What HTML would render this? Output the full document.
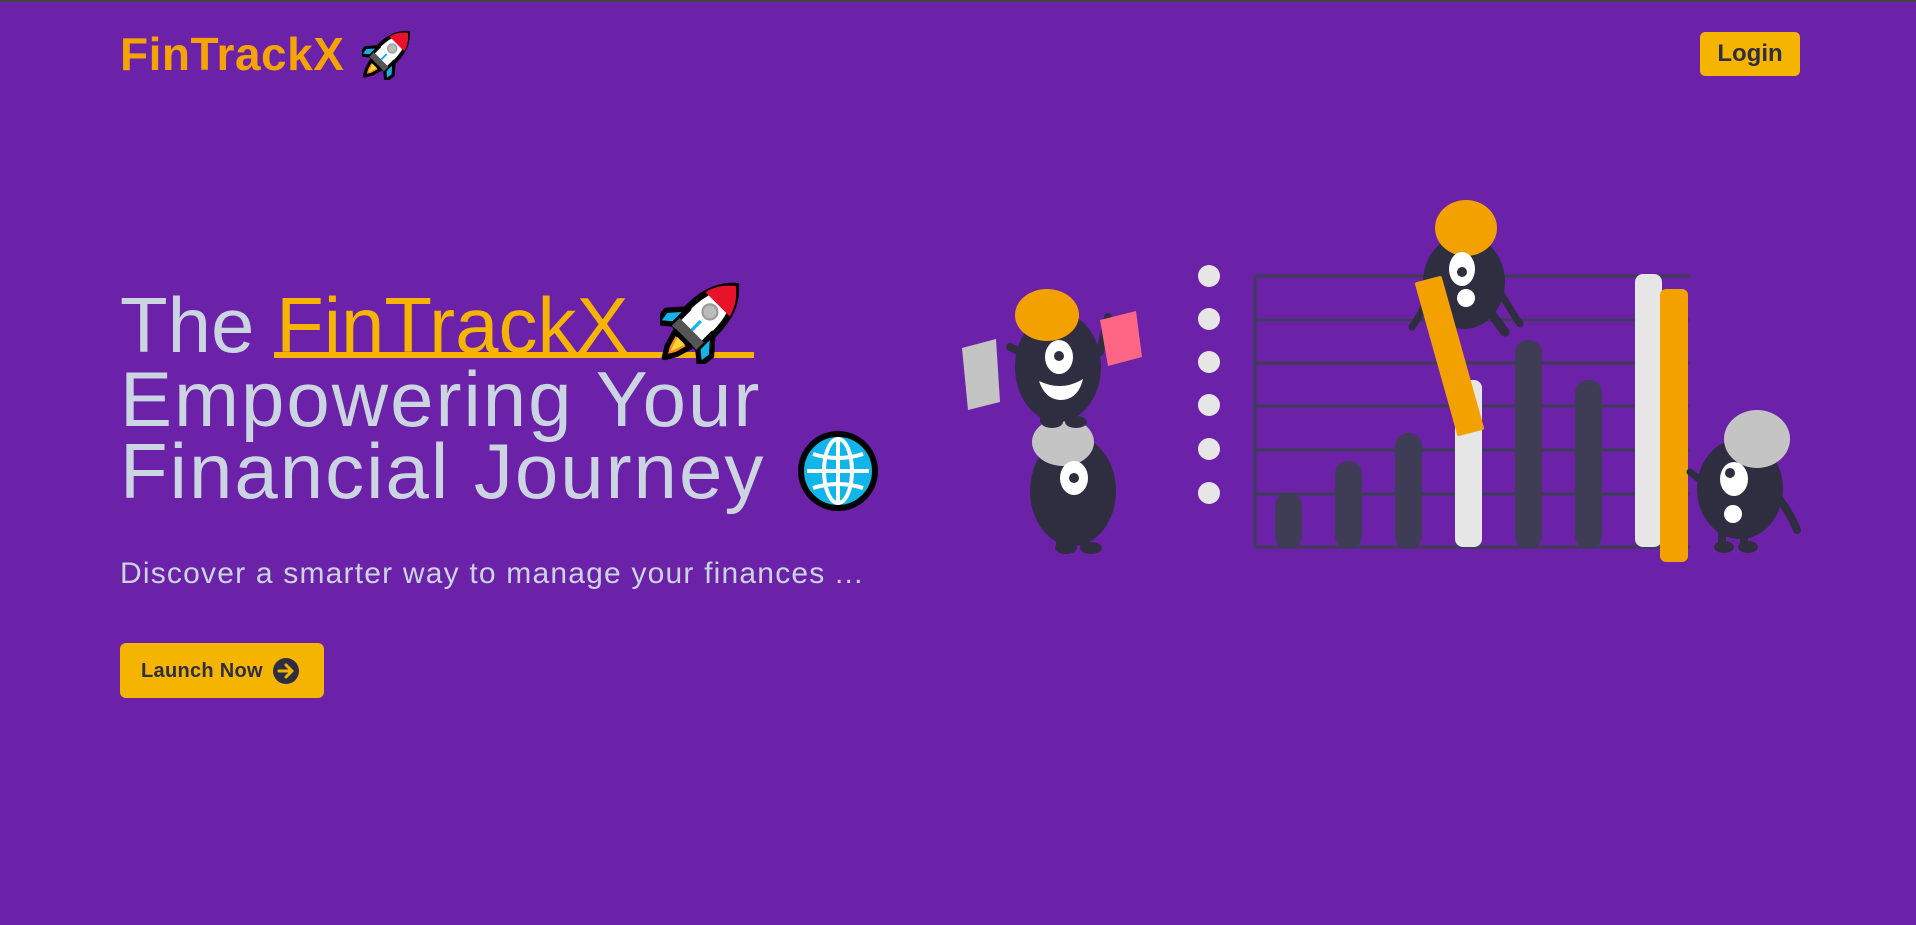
<!DOCTYPE html>
<html><head><meta charset="utf-8"><style>
html,body{margin:0;padding:0}
body{width:1916px;height:923px;background:#6b21a8;position:relative;overflow:hidden;font-family:"Liberation Sans",sans-serif;border-top:2px solid #444}
.a{position:absolute;white-space:nowrap;line-height:1}
.h{font-size:78px;color:#cbd5e1;letter-spacing:2px}
</style></head><body>
<svg width="0" height="0" style="position:absolute"><defs>
<g id="rocket">
<g transform="rotate(45 50 50)">
<path d="M50 4 C66 18 70 40 66 70 L34 70 C30 40 34 18 50 4Z" fill="#fff" stroke="#000" stroke-width="6"/>
<path d="M50 4 C60 12 64 20 66 28 L34 28 C36 20 40 12 50 4Z" fill="#e8132a"/>
<path d="M34 50 L20 66 L22 80 L34 70Z M66 50 L80 66 L78 80 L66 70Z" fill="#12b5ea" stroke="#000" stroke-width="5" stroke-linejoin="round"/>
<rect x="34" y="62" width="32" height="10" fill="#555"/>
<path d="M40 74 L60 74 L56 88 L50 98 L44 88Z" fill="#ff8c1a" stroke="#000" stroke-width="5" stroke-linejoin="round"/>
<path d="M45 76 L55 76 L50 90Z" fill="#ffd43b"/>
<circle cx="50" cy="38" r="7" fill="#bbb" stroke="#999" stroke-width="2"/>
<line x1="50" y1="50" x2="50" y2="62" stroke="#12b5ea" stroke-width="3"/>
</g></g>
</defs></svg>

<div class="a" style="left:120px;top:29px;font-size:46px;font-weight:bold;color:#f5a300;letter-spacing:0.5px">FinTrackX</div>
<svg class="a" style="left:362px;top:26px" width="52" height="52" viewBox="12 10 80 80"><use href="#rocket"/></svg>

<div class="a" style="left:1700px;top:30px;width:100px;height:44px;background:#f5b400;border-radius:5px;font-size:24px;font-weight:bold;color:#2f2e41;text-align:center;line-height:44px">Login</div>

<div class="a h" style="left:120px;top:284px;letter-spacing:0">The <span style="color:#f5b400">FinTrackX</span></div>
<div class="a" style="left:274px;top:350px;width:480px;height:6px;background:#f5b400"></div>
<svg class="a" style="left:660px;top:276px" width="86" height="86" viewBox="12 10 80 80"><use href="#rocket"/></svg>
<div class="a h" style="left:120px;top:358px">Empowering Your</div>
<div class="a h" style="left:120px;top:430px">Financial Journey</div>
<svg class="a" style="left:797px;top:428px" width="82" height="82" viewBox="0 0 82 82">
<circle cx="41" cy="41" r="37" fill="#12b5ea" stroke="#000" stroke-width="6"/>
<g stroke="#fff" stroke-width="4" fill="none">
<ellipse cx="41" cy="41" rx="14" ry="32"/>
<line x1="41" y1="8" x2="41" y2="74"/>
<line x1="10" y1="41" x2="72" y2="41"/>
<path d="M16 24 Q41 32 66 24 M16 58 Q41 50 66 58"/>
</g></svg>

<div class="a" style="left:120px;top:557px;font-size:30px;color:#cbd5e1;letter-spacing:1.2px">Discover a smarter way to manage your finances ...</div>

<div class="a" style="left:120px;top:641px;width:204px;height:55px;background:#f5b400;border-radius:6px"></div>
<div class="a" style="left:141px;top:659px;font-size:20px;font-weight:bold;color:#2f2e41;letter-spacing:0.3px">Launch Now</div>
<svg class="a" style="left:272px;top:655px" width="28" height="28" viewBox="0 0 28 28"><circle cx="14" cy="14" r="13" fill="#2f2e41"/><path d="M7 14H20M14 8L20 14L14 20" stroke="#f5b400" stroke-width="3" fill="none" stroke-linecap="round" stroke-linejoin="round"/></svg>

<svg class="a" style="left:0;top:0" width="1916" height="923" viewBox="0 0 1916 923">
<g fill="#e6e6e6">
<ellipse cx="1209" cy="274" rx="11" ry="11"/><ellipse cx="1209" cy="317" rx="11" ry="11"/><ellipse cx="1209" cy="360" rx="11" ry="11"/><ellipse cx="1209" cy="403" rx="11" ry="11"/><ellipse cx="1209" cy="447" rx="11" ry="11"/><ellipse cx="1209" cy="491" rx="11" ry="11"/>
</g>
<g stroke="#3f3d56" stroke-width="3">
<line x1="1255" y1="274" x2="1690" y2="274"/><line x1="1255" y1="318" x2="1690" y2="318"/><line x1="1255" y1="361" x2="1690" y2="361"/><line x1="1255" y1="404" x2="1690" y2="404"/><line x1="1255" y1="448" x2="1690" y2="448"/><line x1="1255" y1="492" x2="1690" y2="492"/><line x1="1255" y1="545" x2="1690" y2="545"/><line x1="1255" y1="274" x2="1255" y2="545"/>
</g>
<g fill="#3f3d56">
<rect x="1275" y="491" width="27" height="56" rx="13"/>
<rect x="1335" y="459" width="27" height="88" rx="13"/>
<rect x="1395" y="431" width="27" height="116" rx="13"/>
<rect x="1515" y="338" width="27" height="209" rx="13"/>
<rect x="1575" y="378" width="27" height="169" rx="13"/>
</g>
<rect x="1455" y="378" width="27" height="167" rx="8" fill="#e6e6e6"/>
<rect x="1635" y="272" width="27" height="273" rx="8" fill="#e6e6e6"/>
<rect x="1660" y="287" width="28" height="273" rx="6" fill="#f3a100"/>
<g fill="#2f2e41"><rect x="1056" y="500" width="9" height="46"/><rect x="1080" y="500" width="9" height="46"/><ellipse cx="1066" cy="546" rx="11" ry="6"/><ellipse cx="1091" cy="546" rx="11" ry="6"/></g>
<ellipse cx="1073" cy="489" rx="43" ry="55" fill="#2f2e41"/>
<ellipse cx="1063" cy="440" rx="31" ry="24" fill="#c4c4c4"/>
<ellipse cx="1074" cy="476" rx="14" ry="17" fill="#fff"/><circle cx="1074" cy="476" r="5" fill="#2f2e41"/>
<path d="M1010 345 L1040 360" stroke="#2f2e41" stroke-width="8" stroke-linecap="round"/>
<path d="M1100 350 L1108 315" stroke="#2f2e41" stroke-width="8" stroke-linecap="round"/>
<path d="M962 346 L996 337 L1000 400 L968 408Z" fill="#c4c4c4"/>
<path d="M1100 318 L1136 309 L1142 355 L1108 364Z" fill="#ff6584"/>
<g fill="#2f2e41"><rect x="1040" y="400" width="9" height="20"/><rect x="1066" y="400" width="9" height="20"/><ellipse cx="1052" cy="420" rx="11" ry="6"/><ellipse cx="1076" cy="420" rx="11" ry="6"/></g>
<ellipse cx="1058" cy="365" rx="43" ry="55" fill="#2f2e41"/>
<ellipse cx="1047" cy="313" rx="32" ry="26" fill="#f3a100"/>
<ellipse cx="1059" cy="355" rx="14" ry="17" fill="#fff"/><circle cx="1059" cy="354" r="5" fill="#2f2e41"/>
<path d="M1039 379 Q1062 390 1083 377 Q1078 398 1060 398 Q1045 397 1039 379Z" fill="#fff"/>
<path d="M1430 290 Q1420 315 1412 325" stroke="#2f2e41" stroke-width="7" stroke-linecap="round" fill="none"/>
<path d="M1500 290 Q1512 310 1520 322" stroke="#2f2e41" stroke-width="7" stroke-linecap="round" fill="none"/>
<path d="M1490 310 L1505 330" stroke="#2f2e41" stroke-width="9" stroke-linecap="round"/>
<ellipse cx="1464" cy="280" rx="41" ry="47" fill="#2f2e41"/>
<ellipse cx="1466" cy="226" rx="31" ry="28" fill="#f3a100"/>
<ellipse cx="1462" cy="267" rx="13" ry="17" fill="#fff"/><circle cx="1462" cy="270" r="5" fill="#2f2e41"/>
<ellipse cx="1466" cy="296" rx="9" ry="9" fill="#fff"/>
<path d="M1417 282 L1440 276 L1482 426 L1459 432Z" fill="#f3a100" stroke="#f3a100" stroke-width="4" stroke-linejoin="round"/>
<path d="M1690 470 L1708 484" stroke="#2f2e41" stroke-width="7" stroke-linecap="round"/>
<path d="M1774 490 Q1790 510 1797 528" stroke="#2f2e41" stroke-width="8" stroke-linecap="round" fill="none"/>
<g fill="#2f2e41"><rect x="1718" y="520" width="8" height="26"/><rect x="1740" y="520" width="8" height="26"/><ellipse cx="1724" cy="545" rx="10" ry="6"/><ellipse cx="1748" cy="545" rx="10" ry="6"/></g>
<ellipse cx="1740" cy="487" rx="43" ry="50" fill="#2f2e41"/>
<ellipse cx="1757" cy="437" rx="33" ry="29" fill="#c4c4c4"/>
<ellipse cx="1734" cy="477" rx="14" ry="17" fill="#fff"/><circle cx="1730" cy="471" r="5" fill="#2f2e41"/>
<ellipse cx="1733" cy="512" rx="9" ry="9" fill="#fff"/>
</svg>
</body></html>
